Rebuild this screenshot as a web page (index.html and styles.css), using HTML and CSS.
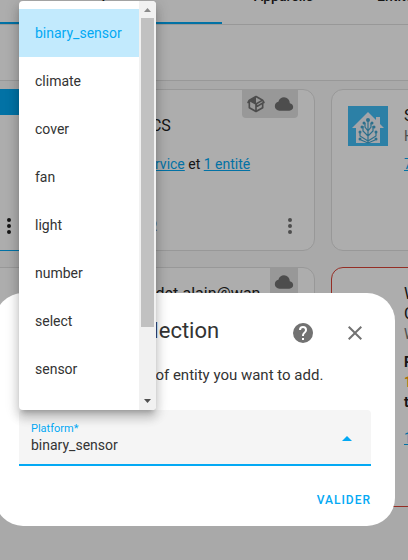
FILE: index.html
```html
<!DOCTYPE html>
<html lang="fr">
  <head>
    <meta charset="UTF-8" />
    <meta name="viewport" content="width=device-width, initial-scale=1.0" />
    <title>Intégrations</title>
    <link rel="stylesheet" href="styles.css">
  </head>
  <body>
    <!-- Shared icons -->
    <svg class="sprite" aria-hidden="true">
      <symbol id="icon-dots" viewBox="0 0 24 24">
        <path d="M12,16A2,2 0 0,1 14,18A2,2 0 0,1 12,20A2,2 0 0,1 10,18A2,2 0 0,1 12,16M12,10A2,2 0 0,1 14,12A2,2 0 0,1 12,14A2,2 0 0,1 10,12A2,2 0 0,1 12,10M12,4A2,2 0 0,1 14,6A2,2 0 0,1 12,8A2,2 0 0,1 10,6A2,2 0 0,1 12,4Z" />
      </symbol>
      <symbol id="icon-cloud" viewBox="0 0 24 24">
        <path d="M6.5 20Q4.22 20 2.61 18.43 1 16.85 1 14.58 1 12.63 2.17 11.1 3.35 9.57 5.25 9.15 5.88 6.85 7.75 5.43 9.63 4 12 4 14.93 4 16.96 6.04 19 8.07 19 11 20.73 11.2 21.86 12.5 23 13.78 23 15.5 23 17.38 21.69 18.69 20.38 20 18.5 20Z" />
      </symbol>
      <symbol id="icon-package" viewBox="0 0 24 24">
        <path d="M2,10.96C1.5,10.68 1.35,10.07 1.63,9.59L3.13,7C3.24,6.8 3.41,6.66 3.6,6.58L11.43,2.18C11.59,2.06 11.79,2 12,2C12.21,2 12.41,2.06 12.57,2.18L20.47,6.62C20.66,6.72 20.82,6.88 20.91,7.08L22.36,9.6C22.64,10.08 22.47,10.69 22,10.96L21,11.54V16.5C21,16.88 20.79,17.21 20.47,17.38L12.57,21.82C12.41,21.94 12.21,22 12,22C11.79,22 11.59,21.94 11.43,21.82L3.53,17.38C3.21,17.21 3,16.88 3,16.5V10.96C2.7,11.13 2.32,11.14 2,10.96M12,4.15V4.15L12,10.85V10.85L17.96,7.5L12,4.15M5,15.91L11,19.29V12.58L5,9.21V15.91M19,15.91V12.69L14,15.59C13.67,15.77 13.3,15.76 13,15.6V19.29L19,15.91M13.85,13.36L20.13,9.73L19.55,8.72L13.27,12.35L13.85,13.36Z" />
      </symbol>
    </svg>

    <!-- INTEGRATIONS PAGE -->
    <main class="page">
      <nav class="tabs">
        <a class="tab active" href="#integrations">Intégrations</a>
        <a class="tab" href="#appareils">Appareils</a>
        <a class="tab" href="#entites">Entités</a>
      </nav>
      <div class="search-bar"></div>

      <div class="cards">
        <section class="card discovered">
          <div class="banner"></div>
          <div class="card-footer">
            <button class="menu-button" aria-label="Menu"><svg><use href="#icon-dots" /></svg></button>
          </div>
        </section>

        <section class="card">
          <div class="badges">
            <svg><use href="#icon-package" /></svg>
            <svg><use href="#icon-cloud" /></svg>
          </div>
          <div class="card-header">
            <div class="logo"></div>
            <h2>HACS</h2>
          </div>
          <p class="links"><a href="#service">1 service</a> et <a href="#entite">1 entité</a></p>
          <div class="card-footer">
            <button class="text-button">Configurer</button>
            <button class="menu-button" aria-label="Menu"><svg><use href="#icon-dots" /></svg></button>
          </div>
        </section>

        <section class="card">
          <div class="card-header">
            <svg class="logo" viewBox="0 0 40 40">
              <rect width="40" height="40" fill="#41bdf5" />
              <path fill="#f2f4f9" d="M20 6L4 22H8V37H32V22H36L32 18V11H28V14Z" />
              <g fill="none" stroke="#41a4cf" stroke-width="1.2">
                <path d="M20 37V15M20 35L12 30V25M20 30L15 25V20M20 35L28 30V25M20 30L25 25V20M20 25L17 21V17M20 25L23 21V17M20 37L13 34M20 37L27 34" />
              </g>
              <g fill="#41a4cf">
                <circle cx="20" cy="14" r="2" />
                <circle cx="16" cy="17" r="1.5" />
                <circle cx="24" cy="17" r="1.5" />
                <circle cx="14" cy="21" r="1.5" />
                <circle cx="26" cy="21" r="1.5" />
                <circle cx="12" cy="26" r="1.5" />
                <circle cx="28" cy="26" r="1.5" />
                <circle cx="12" cy="33" r="1.5" />
                <circle cx="28" cy="33" r="1.5" />
              </g>
            </svg>
            <div>
              <h2>Supervisor</h2>
              <p class="domain">Home Assistant</p>
            </div>
          </div>
          <p class="links"><a href="#services">7 services</a></p>
        </section>

        <section class="card"></section>

        <section class="card">
          <div class="badges">
            <svg><use href="#icon-cloud" /></svg>
          </div>
          <div class="card-header">
            <div class="logo"></div>
            <h2>gaudet.alain@wan<br>adoo.fr</h2>
          </div>
        </section>

        <section class="card error">
          <div class="card-header">
            <div class="logo"></div>
            <div>
              <h2>Withings<br>Cloud</h2>
              <p class="domain">Withings</p>
            </div>
          </div>
          <p class="message">Problème<br><span class="warning">1 erreur</span><br>trouvée</p>
          <p class="links"><a href="#appareil">1 appareil</a></p>
        </section>
      </div>
    </main>

    <div class="scrim"></div>

    <!-- DIALOG -->
    <form class="dialog" role="dialog" aria-labelledby="dialog-title">
      <header class="dialog-header">
        <h1 id="dialog-title">Entity type selection</h1>
        <button type="button" class="icon-button" aria-label="Aide">
          <svg viewBox="0 0 24 24"><path d="M15.07,11.25L14.17,12.17C13.45,12.89 13,13.5 13,15H11V14.5C11,13.39 11.45,12.39 12.17,11.67L13.41,10.41C13.78,10.05 14,9.55 14,9C14,7.89 13.1,7 12,7A2,2 0 0,0 10,9H8A4,4 0 0,1 12,5A4,4 0 0,1 16,9C16,9.88 15.64,10.67 15.07,11.25M13,19H11V17H13M12,2A10,10 0 0,0 2,12A10,10 0 0,0 12,22A10,10 0 0,0 22,12C22,6.47 17.5,2 12,2Z" /></svg>
        </button>
        <button type="button" class="icon-button" aria-label="Fermer">
          <svg viewBox="0 0 24 24"><path d="M19,6.41L17.59,5L12,10.59L6.41,5L5,6.41L10.59,12L5,17.59L6.41,19L12,13.41L17.59,19L19,17.59L13.41,12L19,6.41Z" /></svg>
        </button>
      </header>
      <p class="description">Please select a type of entity you want to add.</p>
      <div class="field">
        <label for="platform">Platform*</label>
        <select id="platform">
          <option>binary_sensor</option>
          <option>climate</option>
          <option>cover</option>
          <option>fan</option>
          <option>light</option>
          <option>number</option>
          <option>select</option>
          <option>sensor</option>
          <option>switch</option>
        </select>
        <svg class="arrow" viewBox="0 0 10 5"><path d="M0 5L5 0L10 5Z" /></svg>
      </div>
      <footer class="dialog-actions">
        <button type="submit" class="submit">Valider</button>
      </footer>
    </form>

    <!-- OPEN PLATFORM MENU -->
    <div class="menu">
      <ul role="listbox" aria-label="Platform">
        <li role="option" class="selected" aria-selected="true">binary_sensor</li>
        <li role="option">climate</li>
        <li role="option">cover</li>
        <li role="option">fan</li>
        <li role="option">light</li>
        <li role="option">number</li>
        <li role="option">select</li>
        <li role="option">sensor</li>
      </ul>
      <div class="scrollbar">
        <svg class="up" viewBox="0 0 7 4"><path d="M0 4L3.5 0L7 4Z" /></svg>
        <div class="thumb"></div>
        <svg class="down" viewBox="0 0 7 4"><path d="M0 0L3.5 4L7 0Z" /></svg>
      </div>
    </div>
  </body>
</html>
```
FILE: styles.css
```css
* {
  box-sizing: border-box;
  margin: 0;
  padding: 0;
}

html,
body {
  height: 100%;
  overflow: hidden;
}

body {
  position: relative;
  background-color: #fafafa;
  color: #212121;
  font-family: Roboto, "Noto Sans", sans-serif;
  font-size: 14px;
  line-height: 20px;
}

button,
select {
  font: inherit;
  border: none;
  background: none;
  cursor: pointer;
}

a {
  color: #03a9f4;
}

.sprite {
  display: none;
}

/* Page, scrolled down and to the right */
.page {
  margin-top: -32px;
}

.tabs {
  display: flex;
  height: 57px;
  background-color: #fff;
  border-bottom: 1px solid #e0e0e0;
}

.tab {
  display: flex;
  flex: none;
  align-items: center;
  justify-content: center;
  padding: 0 32px;
  color: #212121;
  font-weight: 500;
  text-decoration: none;
}

.tab.active {
  width: 222px;
  border-bottom: 2px solid #03a9f4;
}

.search-bar {
  height: 56px;
  background-color: #fff;
  border-bottom: 1px solid #e0e0e0;
}

.cards {
  display: grid;
  grid-template-columns: repeat(3, 259px);
  grid-template-rows: 162px 240px;
  gap: 16px;
  margin: 8px 0 0 -219px;
}

.card {
  position: relative;
  display: flex;
  flex-direction: column;
  background-color: #fff;
  border: 1px solid #e0e0e0;
  border-radius: 12px;
}

.card.discovered {
  border-color: #03a9f4;
}

.card.error {
  border-color: #db4437;
}

.banner {
  height: 25px;
  background-color: #03a9f4;
}

.card-header {
  display: flex;
  align-items: center;
  gap: 16px;
  padding: 16px 16px 8px;
}

.logo {
  flex: none;
  width: 40px;
  height: 40px;
}

.card h2 {
  font-size: 16px;
  font-weight: 400;
  line-height: 20px;
}

.domain {
  color: #727272;
}

.links,
.message {
  padding: 0 16px 0 72px;
}

.message {
  padding-bottom: 16px;
  font-weight: 700;
}

.warning {
  color: #ffa600;
}

.card-footer {
  display: flex;
  align-items: center;
  height: 48px;
  margin-top: auto;
  padding: 0 12px 0 16px;
}

.text-button {
  color: #727272;
  text-transform: uppercase;
}

.menu-button {
  height: 24px;
  margin-left: auto;
  color: #727272;
}

.menu-button svg {
  display: block;
  width: 24px;
  height: 24px;
  fill: currentColor;
}

.discovered .card-footer {
  padding-right: 18px;
}

.discovered .menu-button {
  color: #212121;
}

.badges {
  position: absolute;
  top: 0;
  right: 16px;
  display: flex;
  gap: 8px;
  padding: 4px;
  background-color: #e0e0e0;
  border-radius: 0 0 4px 4px;
}

.badges svg {
  width: 20px;
  height: 20px;
  fill: #727272;
}

.scrim {
  position: absolute;
  inset: 0;
  background-color: rgba(0, 0, 0, 0.32);
}

/* Dialog */
.dialog {
  position: absolute;
  top: 293px;
  left: -5px;
  right: 13px;
  padding: 16px 24px 8px;
  background-color: #fff;
  border-radius: 28px;
  color: #333;
}

.dialog-header {
  display: flex;
  align-items: center;
  gap: 28px;
  height: 48px;
  padding: 0 4px;
}

.dialog-header h1 {
  flex: 1;
  padding-bottom: 4px;
  font-size: 22px;
  font-weight: 400;
  line-height: 28px;
  white-space: nowrap;
}

.icon-button {
  width: 24px;
  height: 24px;
}

.icon-button svg {
  display: block;
  width: 24px;
  height: 24px;
  fill: #727272;
}

.description {
  padding: 8px 0 25px;
  font-size: 15px;
}

.field {
  position: relative;
  height: 56px;
  background-color: #f5f5f5;
  border-bottom: 2px solid #03a9f4;
  border-radius: 4px 4px 0 0;
}

.field label {
  position: absolute;
  top: 11px;
  left: 12px;
  color: #03a9f4;
  font-size: 11px;
  line-height: 16px;
}

.field select {
  width: 100%;
  height: 54px;
  padding: 16px 40px 0 12px;
  color: #333;
  appearance: none;
  outline: none;
}

.arrow {
  position: absolute;
  top: 26px;
  right: 19px;
  width: 10px;
  height: 5px;
  fill: #03a9f4;
  pointer-events: none;
}

.dialog-actions {
  display: flex;
  justify-content: flex-end;
  padding-top: 16px;
}

.submit {
  height: 36px;
  color: #03a9f4;
  font-size: 12px;
  font-weight: 500;
  letter-spacing: 1px;
  text-transform: uppercase;
}

/* Platform menu */
.menu {
  position: absolute;
  top: 1px;
  left: 19px;
  display: flex;
  width: 137px;
  height: 409px;
  overflow: hidden;
  background-color: #fff;
  border-radius: 4px;
  box-shadow: 0 5px 5px -3px rgba(0, 0, 0, 0.2),
    0 8px 10px 1px rgba(0, 0, 0, 0.14), 0 3px 14px 2px rgba(0, 0, 0, 0.12);
  color: #333;
}

.menu ul {
  flex: 1;
  padding-top: 8px;
  list-style: none;
}

.menu li {
  display: flex;
  align-items: center;
  height: 48px;
  padding-left: 16px;
  cursor: pointer;
}

.menu li.selected {
  background-color: #c2eafd;
  color: #03a9f4;
}

.scrollbar {
  display: flex;
  flex-direction: column;
  align-items: center;
  width: 17px;
  padding: 7px 0;
  background-color: #f1f1f1;
}

.scrollbar svg {
  width: 7px;
  height: 4px;
  fill: #505050;
}

.scrollbar .up {
  fill: #8b8b8b;
}

.thumb {
  width: 13px;
  height: 309px;
  margin-top: 6px;
  background-color: #c1c1c1;
}

.scrollbar .down {
  margin-top: auto;
}
```
